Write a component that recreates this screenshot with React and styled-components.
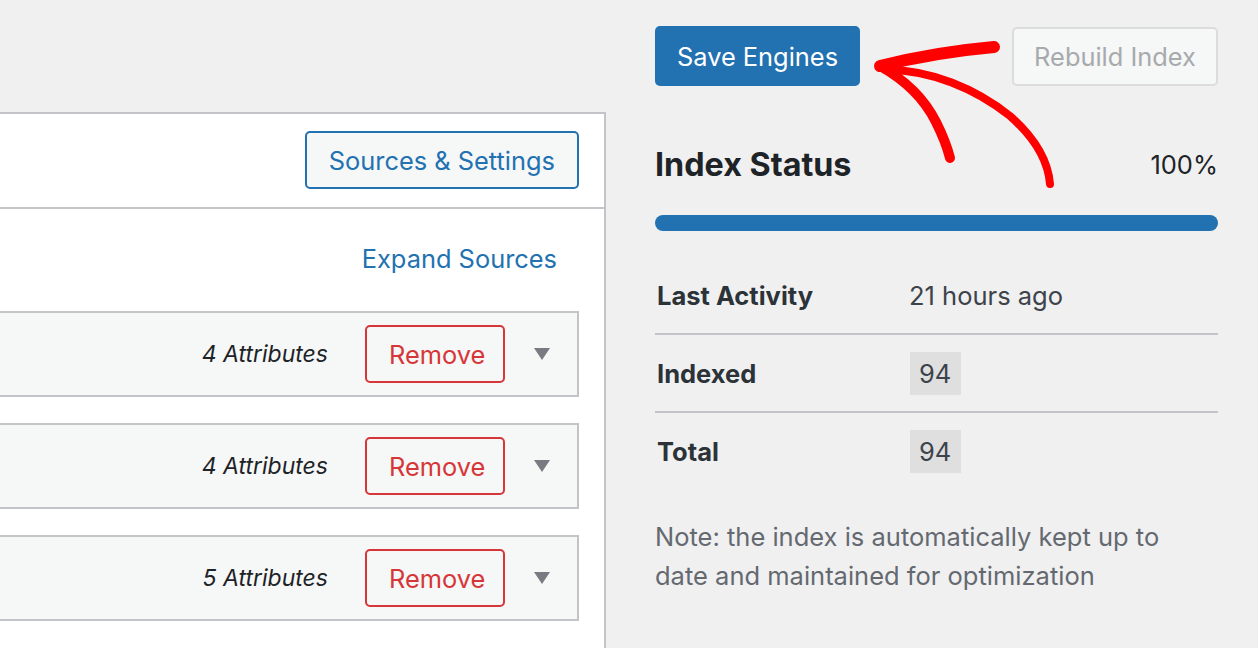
import styled, { createGlobalStyle } from "styled-components";

const GlobalStyle = createGlobalStyle`
  html, body {
    margin: 0;
    padding: 0;
    background: #f0f0f1;
    font-family: Inter, "Noto Sans", sans-serif;
    color: #3c434a;
  }
`;

/** 전체 화면 */
const Page = styled.div`
  position: relative;
  display: flex;
  width: 1258px;
  height: 648px;
  overflow: hidden;
  background: #f0f0f1;
`;

const MainPanel = styled.section`
  display: flex;
  flex-direction: column;
  box-sizing: border-box;
  width: 606px;
  margin-top: 112px;
  background: #fff;
  border-top: 2px solid #c3c4c7;
  border-right: 2px solid #c3c4c7;
`;

const PanelHeader = styled.header`
  display: flex;
  justify-content: flex-end;
  box-sizing: border-box;
  height: 95px;
  padding: 17px 25px 0 0;
  border-bottom: 2px solid #c3c4c7;
`;

const OutlineButton = styled.button`
  box-sizing: border-box;
  width: ${(p) => p.$width || "auto"};
  height: 58px;
  padding: 0 22px;
  border: 2px solid ${(p) => p.$color};
  border-radius: 5px;
  background: #f6f7f7;
  color: ${(p) => p.$color};
  font-family: inherit;
  font-size: 25.4px;
  cursor: pointer;
`;

const PanelBody = styled.div`
  display: flex;
  flex-direction: column;
  align-items: flex-end;
  gap: 26px;
  padding: 30px 25px 0 0;
`;

const ExpandLink = styled.a`
  margin-right: 22px;
  margin-bottom: 6px;
  color: #2271b1;
  font-size: 25.4px;
  line-height: 40px;
  text-decoration: none;
`;

const SourceRow = styled.div`
  display: flex;
  align-items: center;
  justify-content: flex-end;
  box-sizing: border-box;
  width: 100%;
  height: 86px;
  padding-right: 27px;
  background: #f6f7f7;
  border: 2px solid #c3c4c7;
  border-left: 0;
`;

const Attributes = styled.span`
  margin-right: 37px;
  color: #1d2327;
  font-size: 23px;
  font-style: italic;
`;

const Caret = styled.span`
  width: 0;
  height: 0;
  margin-left: 29px;
  border-left: 8px solid transparent;
  border-right: 8px solid transparent;
  border-top: 12px solid #787c82;
`;

const Side = styled.aside`
  display: flex;
  flex-direction: column;
  width: 563px;
  margin-left: 49px;
  padding-top: 26px;
`;

const ButtonBar = styled.div`
  display: flex;
  justify-content: space-between;
  align-items: flex-start;
`;

const PrimaryButton = styled.button`
  box-sizing: border-box;
  width: 205px;
  height: 60px;
  border: 0;
  border-radius: 5px;
  background: #2271b1;
  color: #fff;
  font-family: inherit;
  font-size: 25.4px;
`;

const DisabledButton = styled.button`
  box-sizing: border-box;
  width: 206px;
  height: 59px;
  margin-top: 1px;
  border: 2px solid #dcdcde;
  border-radius: 5px;
  background: #f6f7f7;
  color: #a7aaad;
  font-family: inherit;
  font-size: 25.4px;
`;

const StatusHead = styled.div`
  display: flex;
  justify-content: space-between;
  align-items: center;
  margin-top: 56px;
  height: 44px;

  h2 {
    margin: 0;
    color: #1d2327;
    font-size: 32.3px;
    font-weight: 700;
  }

  span {
    color: #1d2327;
    font-size: 25.5px;
  }
`;

const Progress = styled.div`
  height: 16px;
  margin-top: 29px;
  border-radius: 8px;
  background: #2271b1;
`;

const StatusTable = styled.div`
  display: grid;
  grid-template-columns: 254px 1fr;
  margin-top: 26px;
`;

const Cell = styled.div`
  display: flex;
  align-items: center;
  height: 76px;
  padding-left: ${(p) => (p.$label ? "2px" : "0")};
  border-bottom: ${(p) => (p.$last ? "0" : "2px solid #c3c4c7")};
  color: ${(p) => (p.$label ? "#2c3338" : "#3c434a")};
  font-size: 25.5px;
  font-weight: ${(p) => (p.$label ? 700 : 400)};
`;

const Count = styled.span`
  margin-left: 1px;
  padding: 7px 10px 7px 9px;
  background: #dfdfe0;
  line-height: 29px;
`;

const Note = styled.p`
  margin: 28px 0 0;
  color: #646970;
  font-size: 25.5px;
  line-height: 39px;
`;

const ArrowSvg = styled.svg`
  position: absolute;
  left: 0;
  top: 0;
  pointer-events: none;
`;

const sources = [4, 4, 5];

const rows = [
  { label: "Last Activity", value: "21 hours ago" },
  { label: "Indexed", value: "94", badge: true },
  { label: "Total", value: "94", badge: true, last: true },
];

const App = () => {
  return (
    <>
      <GlobalStyle />
      <Page>
        <MainPanel>
          <PanelHeader>
            <OutlineButton $color="#2271b1">Sources &amp; Settings</OutlineButton>
          </PanelHeader>
          <PanelBody>
            <ExpandLink href="#">Expand Sources</ExpandLink>
            {sources.map((n, i) => (
              <SourceRow key={i}>
                <Attributes>{n} Attributes</Attributes>
                <OutlineButton $color="#d63638" $width="140px">
                  Remove
                </OutlineButton>
                <Caret />
              </SourceRow>
            ))}
          </PanelBody>
        </MainPanel>

        <Side>
          <ButtonBar>
            <PrimaryButton>Save Engines</PrimaryButton>
            <DisabledButton>Rebuild Index</DisabledButton>
          </ButtonBar>
          <StatusHead>
            <h2>Index Status</h2>
            <span>100%</span>
          </StatusHead>
          <Progress />
          <StatusTable>
            {rows.map((r) => [
              <Cell $label $last={r.last} key={r.label}>
                {r.label}
              </Cell>,
              <Cell $last={r.last} key={r.label + "-v"}>
                {r.badge ? <Count>{r.value}</Count> : r.value}
              </Cell>,
            ])}
          </StatusTable>
          <Note>
            Note: the index is automatically kept up to date and maintained for
            optimization
          </Note>
        </Side>

        {/* 손으로 그린 빨간 화살표 */}
        <ArrowSvg width="1258" height="648" viewBox="0 0 1258 648">
          <g fill="none" stroke="#ff0000" strokeLinecap="round" strokeLinejoin="round">
            <path d="M994 47 C960 50 920 56 880 66" strokeWidth="12" />
            <path d="M880 66 C905 80 925 100 936 122 C944 138 948 150 950 158" strokeWidth="10" />
            <path d="M888 70 C930 70 975 88 1010 116 C1035 138 1048 160 1050 184" strokeWidth="8" />
          </g>
        </ArrowSvg>
      </Page>
    </>
  );
};

export default App;
